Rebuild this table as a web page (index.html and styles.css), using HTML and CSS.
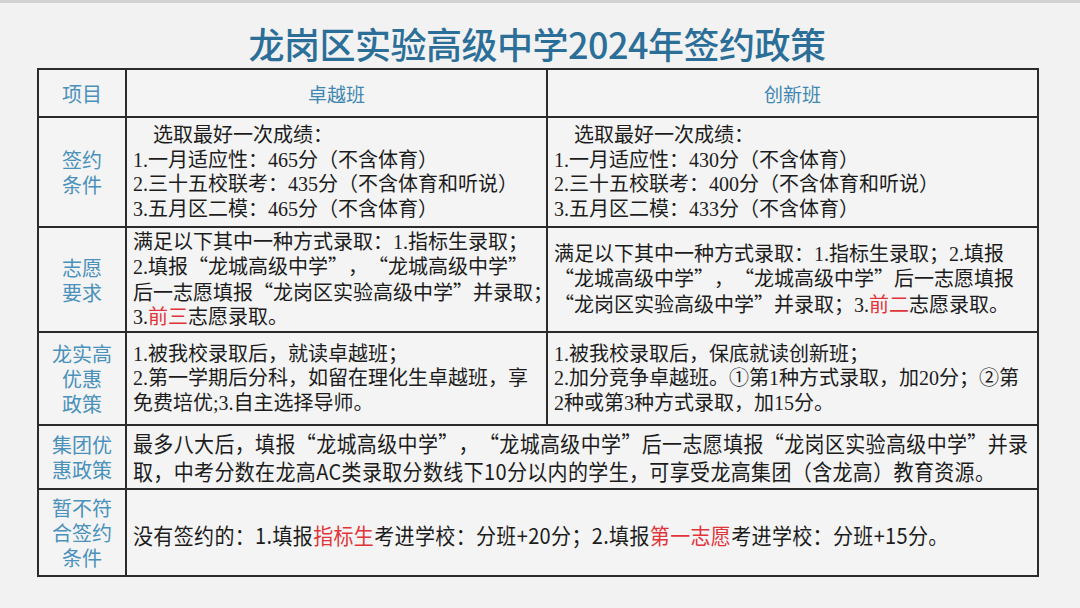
FILE: index.html
```html
<!DOCTYPE html>
<html lang="zh-CN">
<head>
<meta charset="utf-8">
<title>龙岗区实验高级中学2024年签约政策</title>
<link rel="stylesheet" href="styles.css">
</head>
<body>
<div class="page">
  <h1 class="title">龙岗区实验高级中学2024年签约政策</h1>
  <table class="policy">
    <colgroup>
      <col class="c1"><col class="c2"><col class="c3">
    </colgroup>
    <tr class="r-head">
      <th class="label">项目</th>
      <th class="head">卓越班</th>
      <th class="head">创新班</th>
    </tr>
    <tr class="r1">
      <td class="label">签约<br>条件</td>
      <td class="txt"><span class="ind">选取最好一次成绩：</span><br>1.一月适应性：465分（不含体育）<br>2.三十五校联考：435分（不含体育和听说）<br>3.五月区二模：465分（不含体育）</td>
      <td class="txt"><span class="ind">选取最好一次成绩：</span><br>1.一月适应性：430分（不含体育）<br>2.三十五校联考：400分（不含体育和听说）<br>3.五月区二模：433分（不含体育）</td>
    </tr>
    <tr class="r2">
      <td class="label">志愿<br>要求</td>
      <td class="txt">满足以下其中一种方式录取：1.指标生录取；<br>2.填报<span class="q">“</span>龙城高级中学<span class="q">”</span>，<span class="q">“</span>龙城高级中学<span class="q">”</span><br>后一志愿填报<span class="q">“</span>龙岗区实验高级中学<span class="q">”</span>并录取；<br>3.<span class="red">前三</span>志愿录取。</td>
      <td class="txt">满足以下其中一种方式录取：1.指标生录取；2.填报<br><span class="q">“</span>龙城高级中学<span class="q">”</span>，<span class="q">“</span>龙城高级中学<span class="q">”</span>后一志愿填报<br><span class="q">“</span>龙岗区实验高级中学<span class="q">”</span>并录取；3.<span class="red">前二</span>志愿录取。</td>
    </tr>
    <tr class="r3">
      <td class="label">龙实高<br>优惠<br>政策</td>
      <td class="txt">1.被我校录取后，就读卓越班；<br>2.第一学期后分科，如留在理化生卓越班，享<br>免费培优;3.自主选择导师。</td>
      <td class="txt">1.被我校录取后，保底就读创新班；<br>2.加分竞争卓越班。①第1种方式录取，加20分；②第<br>2种或第3种方式录取，加15分。</td>
    </tr>
    <tr class="r4">
      <td class="label">集团优<br>惠政策</td>
      <td class="txt wide" colspan="2"><span class="cond">最多八大后，填报“龙城高级中学”，“龙城高级中学”后一志愿填报“龙岗区实验高级中学”并录<br>取，中考分数在龙高AC类录取分数线下10分以内的学生，可享受龙高集团（含龙高）教育资源。</span></td>
    </tr>
    <tr class="r5">
      <td class="label">暂不符<br>合签约<br>条件</td>
      <td class="txt wide last" colspan="2"><span class="cond">没有签约的：1.填报<span class="red">指标生</span>考进学校：分班+20分；2.填报<span class="red">第一志愿</span>考进学校：分班+15分。</span></td>
    </tr>
  </table>
</div>
</body>
</html>
```

FILE: styles.css
```css
html, body {
  margin: 0;
  padding: 0;
}
body {
  width: 1080px;
  height: 608px;
  overflow: hidden;
  background: #f2f2f2;
  border-top: 3px solid #d2d2d2;
  box-sizing: border-box;
  text-spacing-trim: space-all;
}
.page {
  padding-left: 37px;
}
.title {
  width: 1000px;
  height: 65px;
  margin: 0;
  padding-top: 14px;
  box-sizing: border-box;
  display: flex;
  align-items: center;
  justify-content: center;
  font-family: "Noto Sans CJK SC", sans-serif;
  font-weight: 500;
  font-size: 36px;
  letter-spacing: -0.5px;
  color: #2b6f98;
}
.policy {
  width: 1000px;
  table-layout: fixed;
  border-collapse: collapse;
  background: #f4f4f4;
  font-family: "Liberation Serif", "Noto Sans CJK SC", serif;
  font-size: 20px;
  color: #1c1c1c;
}
.c1 { width: 88px; }
.c2 { width: 421px; }
.c3 { width: 491px; }
.policy th, .policy td {
  border: 2px solid #2b2b2b;
  padding: 0 6px;
  vertical-align: middle;
  white-space: nowrap;
  font-weight: normal;
}
.policy td.txt {
  overflow: visible;
  line-height: 24.5px;
}
.label {
  text-align: center;
  font-family: "Noto Sans CJK SC", sans-serif;
  font-size: 20px;
  line-height: 25px;
  color: #4a91bb;
  padding: 0 !important;
}
.head {
  text-align: center;
  font-family: "Noto Sans CJK SC", sans-serif;
  font-size: 19px;
  color: #3f87b1;
}
.r-head { height: 48px; }
.r1 { height: 110px; }
.r2 { height: 105px; }
.r3 { height: 93px; }
.r4 { height: 64px; }
.r5 { height: 87px; }
.ind {
  padding-left: 20px;
}
.q {
  font-family: "Noto Sans CJK SC", sans-serif;
}
.red {
  color: #e0343a;
}
.wide .cond {
  display: inline-block;
  font-family: "Noto Sans CJK SC", sans-serif;
  font-size: 20px;
  letter-spacing: 0.35px;
  line-height: 26px;
  transform: scaleY(1.08);
}
.last {
  padding-top: 6px !important;
}
```
